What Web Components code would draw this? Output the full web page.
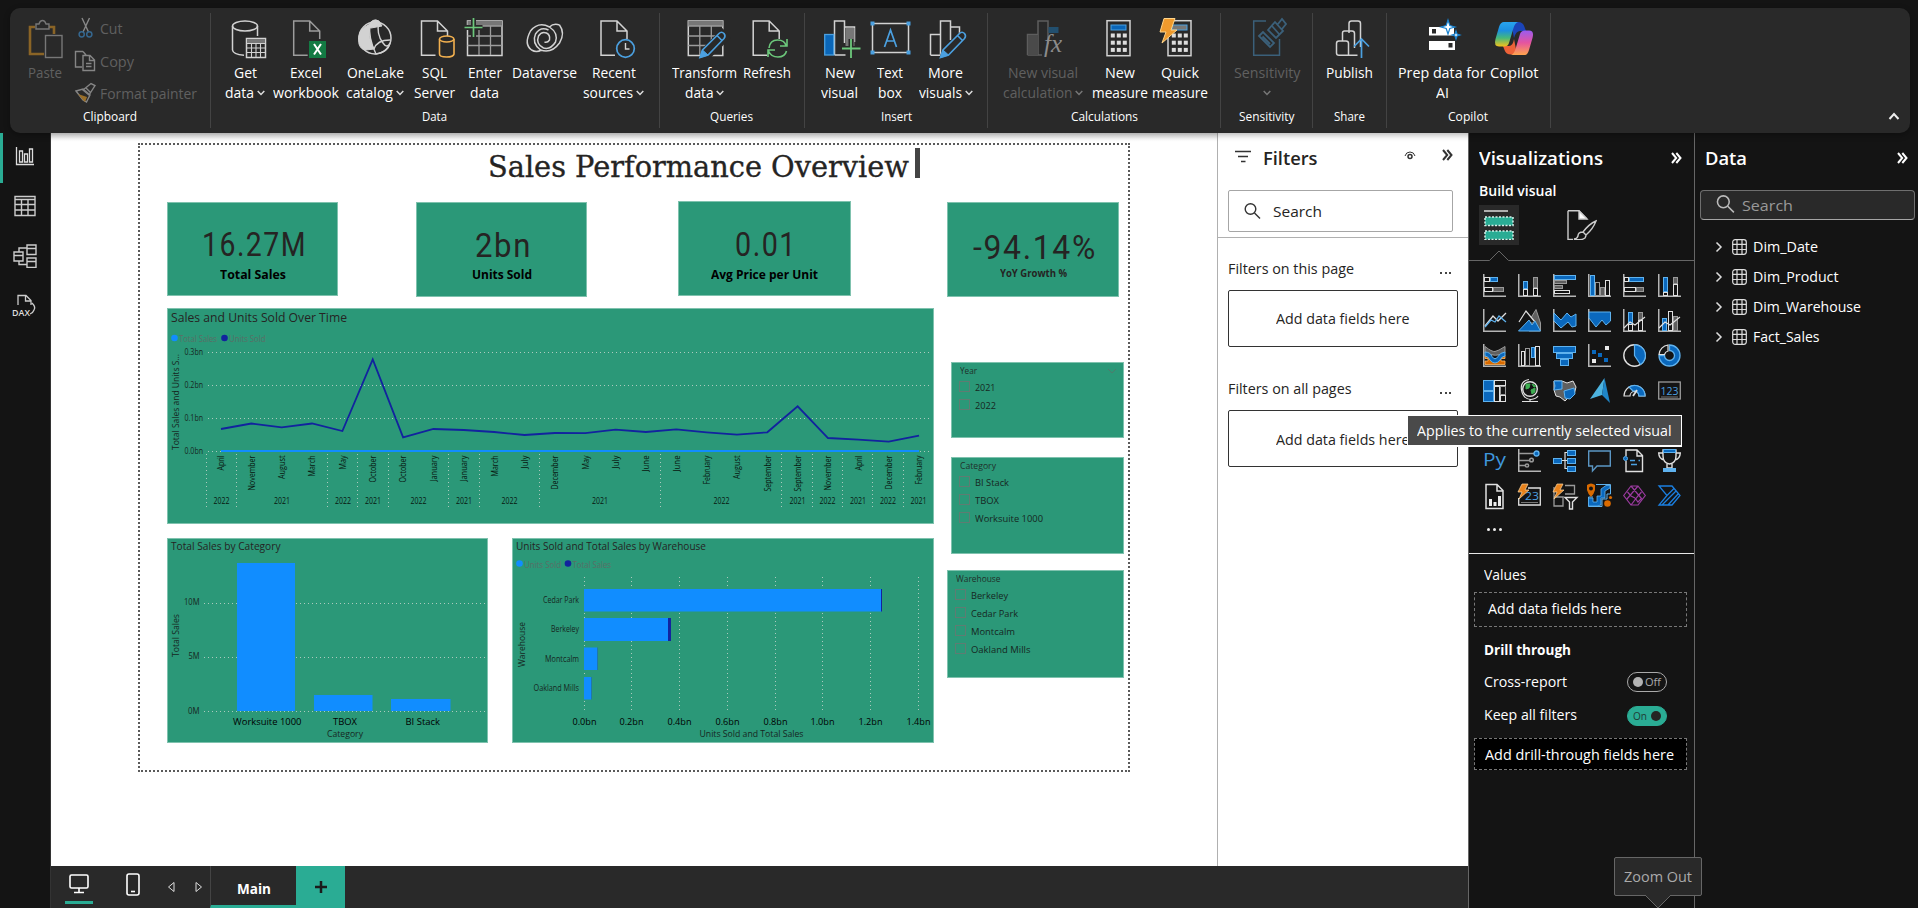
<!DOCTYPE html>
<html lang="en">
<head>
<meta charset="utf-8">
<title>Sales Performance Overview</title>
<style>
html,body{margin:0;height:100%}
body{background:#141414;font-family:"Open Sans","Noto Sans",sans-serif;overflow:hidden}
</style>
</head>
<body>
<report-app></report-app>
<script>
const define=(name,render)=>customElements.define(name,class extends HTMLElement{
  constructor(){super();this.attachShadow({mode:'open'})}
  connectedCallback(){this.shadowRoot.innerHTML=render(this)}
});

/* Text set to an exact advance width: <t-fit w="65">Dataverse</t-fit> */
customElements.define('t-fit',class extends HTMLElement{
  constructor(){super();this.attachShadow({mode:'open'}).innerHTML='<style>:host{display:inline-block;white-space:nowrap;text-align:left}span{display:inline-block;transform-origin:0 50%}</style><span><slot></slot></span>'}
  connectedCallback(){
    const w=+this.getAttribute('w'),s=this.shadowRoot.querySelector('span');
    this.style.width=w+'px';
    const n=s.offsetWidth;
    if(n)s.style.transform=`scaleX(${w/s.getBoundingClientRect().width})`;
  }
});
const F=(w,s,extra='')=>`<t-fit w="${w}" ${extra}>${s}</t-fit>`;

/* ---------- ribbon ---------- */
const L='#d2d2d2',G='#9c9c9c',B='#4ba0e0';
const P=(d,s=L,w=1.5,f='none',x='')=>`<path d="${d}" stroke="${s}" stroke-width="${w}" fill="${f}" ${x}/>`;
const R=(x,y,w,h,s=L,sw=1.5,f='none',r=0)=>`<rect x="${x}" y="${y}" width="${w}" height="${h}" stroke="${s}" stroke-width="${sw}" fill="${f}" rx="${r}"/>`;
const C=(x,y,r,s=L,w=1.5,f='none')=>`<circle cx="${x}" cy="${y}" r="${r}" stroke="${s}" stroke-width="${w}" fill="${f}"/>`;
const doc=(x,c=L)=>P(`M${x} 21H${x+16}L${x+26} 31V39M${x+16} 21V31H${x+26}M${x} 20.3V55.3H${x+14}`,c);
const bars=(x,c=L)=>P(`M${x} 55V34.5H${x+10}V21H${x+20}V27H${x+29}V34M${x+10} 34V55M${x+20} 26V40M${x} 55.2H${x+16}`,c);
const pencil=x=>P(`M${x} 57.5L${x+2.5} 50L${x+19} 33.500Q${x+21.5} 31 ${x+24} 33.500Q${x+26} 36 ${x+24} 38.500L${x+8} 55ZM${x+17} 35.500L${x+22} 40.500`,B,1.6,'#292929')+P(`M${x} 57.500L${x+2.5} 50L${x+8} 55Z`,B,1,B);
const grid=(x,w)=>R(x,21,w,34.5,L,1.5)+`<rect x="${x}" y="21" width="${w}" height="5" fill="#777"/>`+P(`M${x} 26H${x+w}M${x} 36H${x+w}M${x} 45.5H${x+w}M${x+w/3} 26V55M${x+w*2/3} 26V55`,G,1.3);
const calc=(x,c='#0a66b8')=>R(x,20.7,23,35)+R(x+4,25,15,5,B,1,c)+[0,1,2].map(r=>[0,1,2].map(k=>`<rect x="${x+3.8+k*6}" y="${33.5+r*7.2}" width="4" height="4" fill="#ddd"/>`).join('')).join('');
const icons={
 paste:P('M37 27H32V54H46M51 27H56V34','#8a6426',2.6)+P('M38 29V24H41Q42 20.5 44.5 20.5T48 24H51V29Z','#777',1.4)+R(47.5,35.5,16.5,22,'#777',1.4),
 get:`<ellipse cx="245" cy="26" rx="12.5" ry="5" stroke="${L}" stroke-width="1.5" fill="none"/>`+P('M232.5 26V50Q233 54.5 244 55.3M257.5 26V36')+R(246.5,38.5,19,19)+`<rect x="247" y="39" width="18" height="4" fill="#777"/>`+P('M247 43.5H265M247 48H265M247 52.5H265M251.5 43V57M256 43V57M260.5 43V57',L,1.1),
 excel:doc(293.7,G)+`<rect x="309" y="41" width="17" height="17" fill="#137a43"/><path d="M314 44L321 54.500M321 44L314 54.500" stroke="#fff" stroke-width="2"/>`,
 lake:C(375,38,16)+P('M379 22Q376 34 383 43Q387 49 390 43Q388 52 376 54Q368 38 370 24',L,1.4)+P('M370 24Q356 30 359 44Q361 50 366 50L374 49Q367 37 370 24Z',L,1,L)+P('M368 27Q372 17 379 21L382 26L371 28Z',L,1,L)+P('M374 49Q377 40 390 40',L,1.4),
 sql:doc(421)+`<g stroke="#f2b04f" stroke-width="1.6" fill="#292929"><path d="M439 39V54Q439 57 446 57T453.500 54V39"/><ellipse cx="446.200" cy="39" rx="7.200" ry="3"/></g>`,
 enter:grid(467,34.5)+`<path d="M464 27.500H482M473 18V37" stroke="#292929" stroke-width="5"/><path d="M464 27.500H482M473 18V37" stroke="#6cc77b" stroke-width="1.700"/>`,
 verse:P('M531 50Q523 44 530 31Q538 21 549 27Q558 33 555 42Q550 50 543 48Q535 44 538 36Q541 31 546 33Q550 35 549 40Q547 43 544 42M559 25Q565 33 559 43Q551 54 540 50Q531 43 535 34Q540 26 548 30M531 50Q536 53 541 50M559 25Q553 23 549 27',L,1.5),
 recent:doc(600.5)+C(625,48.5,8.8,'#4ba0e0',1.7,'#292929')+P('M625 43V49H629',L,1.4),
 transform:grid(687.8,34.5)+`<path d="M699 58L702 48L722 28L730 38L710 58Z" fill="#292929"/>`+pencil(699.5),
 refresh:doc(753.2)+P('M769 48Q770 40 777.500 40T786 46M787 39V46H780M786.500 51Q785 57 778 57T768.500 51M768 57V50H775','#6cc77b',1.6),
 nvis:P('M834 55V21H844V43M844 27H854V42M834 55H845')+`<rect x="845" y="28" width="9" height="21" fill="#777"/>`+R(824.2,34.5,9,20.5,B,1.3,'#0a66b8')+`<path d="M841 48.500H860M850.500 39V58" stroke="#292929" stroke-width="5"/><path d="M841.500 48.500H860M850.500 39V58" stroke="#6cc77b" stroke-width="1.800"/>`,
 tbox:R(872,23.5,36,29,L,1.5)+[[870,21.5],[906,21.5],[870,50.500],[906,50.500]].map(p=>`<rect x="${p[0]}" y="${p[1]}" width="4" height="4" fill="${B}"/>`).join('')+P('M884 47L890 30L896 47M886.500 41H893.500',B,1.7),
 mvis:bars(930)+`<path d="M939 58L942 48L962 30L969 38L949 58Z" fill="#292929"/>`+pencil(940),
 ncalc:`<g opacity=".55">`+P('M1027.500 55V34.500H1038V21H1048V44M1038 34V55M1027.500 55H1042','#888')+`<rect x="1028" y="35" width="10" height="20" fill="#666"/><rect x="1048.500" y="27" width="10" height="6" fill="#1e6ea8"/></g><text x="1044" y="52" font-family="Liberation Serif" font-style="italic" font-size="25" fill="#8c8c8c">fx</text>`,
 nmeas:calc(1106.5),
 quick:calc(1168,'#777')+`<path d="M1164 18.500H1175L1171 30H1177L1162 43L1166 32H1160Z" fill="#ef9a2d" stroke="#ffd58a" stroke-width="1"/>`,
 sens:P('M1266 21H1253.700V55.300H1279.500V39','#3b607a')+P('M1259 36L1263 32L1274 43L1270 47ZM1262.500 36.500L1270 44M1268 30L1275 22L1283 31L1276 38ZM1278 24L1282 19L1286 24L1282 29M1272 26L1279 34','#3b607a',1.8),
 publish:P('M1360 47V23.500Q1360 21 1357.500 21H1351Q1348.500 21 1348.500 23.500V33M1354 48V33.500Q1354 31 1351.500 31H1344Q1342 31 1342 33V41M1348 55V43.500Q1348 41 1345.500 41H1338.500Q1336 41 1336 43.500V53Q1336 55.300 1338.500 55.300H1357')+P('M1361 58V39M1353.500 46.500L1361 39L1368.500 46.500',B,1.7),
 prep:`<path d="M1429 27H1454V35.500H1429ZM1429 41H1455V50H1429Z" fill="#fff"/><rect x="1432" y="29" width="4" height="4.500" fill="#292929"/><rect x="1448.500" y="43" width="4" height="4.500" fill="#292929"/><path d="M1448 20L1449.800 25.500L1455 27L1449.800 28.500L1448 34L1446.200 28.500L1441 27L1446.200 25.500ZM1456 31L1457 34L1460 35L1457 36L1456 39L1455 36L1452 35L1455 34Z" fill="#fff" stroke="#1681cf" stroke-width="1.200"/>`,
 copilot:`<defs><linearGradient id="ca" x1="0" y1="0" x2="0" y2="1"><stop offset="0" stop-color="#28a4ee"/><stop offset=".35" stop-color="#1c8fe0"/><stop offset=".65" stop-color="#45b87b"/><stop offset="1" stop-color="#f4c21b"/></linearGradient><linearGradient id="cb" x1="0" y1="0" x2="0" y2="1"><stop offset="0" stop-color="#9a5cf0"/><stop offset=".5" stop-color="#e5549f"/><stop offset="1" stop-color="#ffa54d"/></linearGradient></defs>
 <path d="M1511 22H1518Q1523 22 1524.500 27L1526 31H1520Q1516 31 1514 38Z" fill="#1b44b8"/><path d="M1517 54.500H1511Q1506 54.500 1504.500 50L1503 46H1509Q1513 46 1514 39Z" fill="#ee6238"/>
 <path d="M1504 22H1518Q1515 23 1513.500 28L1509 43Q1508 46.500 1504 46.500H1499Q1493.500 46.500 1495.500 39L1499 27Q1500.500 22 1504 22Z" fill="url(#ca)"/><path d="M1525 55H1511Q1514 54 1515.500 49L1520 34Q1521 30.500 1525 30.500H1529Q1534.500 30.500 1532.500 38L1529 50Q1527.500 55 1525 55Z" fill="url(#cb)"/>`
};
const chev=(c='#ddd')=>`<svg width="8" height="6" viewBox="0 0 8 6" style="margin-left:3px;margin-bottom:-1px"><path d="M.7 1L4 4.500L7.300 1" fill="none" stroke="${c}" stroke-width="1.500"/></svg>`;
/* item: centre, width, icon, [word,width], [word,width], chevron, disabled */
const groups=[
 [210,659,434.5,'Data',25,[[245,50,'get',['Get',23],['data',29],1],[306,67,'excel',['Excel',32],['workbook',66]],[375,67,'lake',['OneLake',57],['catalog',47],1],[434.5,44,'sql',['SQL',25],['Server',41]],[484.5,40,'enter',['Enter',34],['data',29]],[544.5,68,'verse',['Dataverse',65]],[613.5,66,'recent',['Recent',44],['sources',50],1]]],
 [659,804,731.5,'Queries',43,[[704.5,68,'transform',['Transform',65],['data',28.5],1],[767,50,'refresh',['Refresh',48]]]],
 [804,987,896.5,'Insert',31,[[839.5,40,'nvis',['New',30],['visual',37]],[889.5,40,'tbox',['Text',26],['box',24]],[945.5,60,'mvis',['More',35],['visuals',43],1]]],
 [987,1220,1104.5,'Calculations',67,[[1043,86,'ncalc',['New visual',70],['calculation',69.5],1,1],[1119.5,60,'nmeas',['New',30],['measure',56]],[1180,60,'quick',['Quick',38],['measure',56]]]],
 [1220,1312,1266.5,'Sensitivity',55.5,[[1267,74,'sens',['Sensitivity',66.5],['',0],1,1]]],
 [1312,1386,1349.5,'Share',31,[[1349.5,60,'publish',['Publish',47]]]],
 [1386,1550,1468,'Copilot',40,[[1442,90,'prep',['Prep data for',87.5],['AI',13]],[1514,50,'copilot',['Copilot',48.5]]]]
];
define('ribbon-button',el=>{
  const d=el.data,[c,w,ic,a,b,ch,dis]=d;
  return `<style>:host{display:flex;flex-direction:column;align-items:center;width:${w}px;flex:none;font-size:15px;color:${dis?'#606060':'#fff'}}
  svg.i{overflow:visible;display:block}.l{height:20px;line-height:20px;display:flex;align-items:center;justify-content:center}</style>
  <svg class="i" width="40" height="40" viewBox="${c-20} 18 40 40">${icons[ic]}</svg><div style="height:4px"></div>
  <div class="l">${F(a[1],a[0])}</div>${b?`<div class="l">${b[1]?F(b[1],b[0]):''}${ch?(b[1]?chev(dis?'#777':'#ddd'):chev('#777').replace('margin-left:3px','')):''}</div>`:''}`;
});
define('ribbon-group',el=>{
  const [x0,x1,lc,lab,lw]=el.data;
  return `<style>:host{display:flex;flex-direction:column;box-sizing:border-box;width:${x1-x0}px;height:115px;flex:none;box-shadow:1px 0 #434343;padding-top:5px}
  .row{display:flex;height:88px}.g{height:20px;line-height:20px;margin-top:1px;font-size:12.500px;color:#fff;padding-left:${lc-lw/2-x0}px}</style>
  <div class="row"><slot></slot></div><div class="g">${F(lw,lab)}</div>`;
});
customElements.define('app-ribbon',class extends HTMLElement{
  constructor(){super();this.attachShadow({mode:'open'})}
  connectedCallback(){
    this.shadowRoot.innerHTML=`<style>:host{display:flex;box-sizing:border-box;height:125px;margin:8px 8px 0 10px;border-radius:10px;background:#292929;padding-top:5px;position:relative;z-index:3;box-shadow:0 2px 6px rgba(0,0,0,.3)}
    .clip{width:200px;height:115px;box-sizing:border-box;box-shadow:1px 0 #434343;display:grid;grid-template-columns:64px 1fr;grid-template-rows:93px 22px;color:#606060;font-size:15px}
    .paste{display:flex;flex-direction:column;align-items:center;padding-left:6px;padding-top:5px}.paste svg{overflow:visible}.paste div{margin-top:4px;line-height:20px}
    .ops{display:grid;grid-template-rows:30px 35px 30px;line-height:20px}.ops div{display:flex;align-items:center;gap:4px}
    .g{grid-column:1/3;text-align:center;font-size:12.500px;color:#fff;line-height:20px;margin-top:1px}
    .end{margin-left:auto;align-self:flex-end;margin-right:9px;margin-bottom:10px}</style>
    <div class="clip"><div class="paste"><svg width="40" height="40" viewBox="27 18 40 40">${icons.paste}</svg><div>${F(34,'Paste')}</div></div>
     <div class="ops">
      <div><svg width="22" height="22" viewBox="0 0 22 22"><path d="M8 1L14.500 15M15.500 1L9 15" stroke="#888" stroke-width="1.400"/><circle cx="7.700" cy="17.300" r="2.600" fill="none" stroke="#35678f" stroke-width="1.500"/><circle cx="15.300" cy="17.300" r="2.600" fill="none" stroke="#35678f" stroke-width="1.500"/></svg>${F(22.5,'Cut')}</div>
      <div><svg width="22" height="22" viewBox="0 0 22 22"><path d="M8 17H1.500V1.500H9M9 1.500L12 5M9 5.500H16L20.500 10V20.500H9ZM15.500 6V10.500H20M12 13.500H17.500M12 16.500H17.500" fill="none" stroke="#858585" stroke-width="1.400"/></svg>${F(34,'Copy')}</div>
      <div><svg width="22" height="22" viewBox="0 0 22 22"><path d="M2 9L9 18L12.500 20L16 13L9 7Z" fill="#292929" stroke="#858585" stroke-width="1.400"/><path d="M4 12L13 15L11 20L9 18Z" fill="#9a6f28"/><path d="M9 8L17 1.500L21 3.500L15 13ZM12 6L17 11" fill="none" stroke="#858585" stroke-width="1.400"/></svg>${F(97,'Format painter')}</div>
     </div><div class="g">${F(54,'Clipboard')}</div></div><slot></slot>
    <svg class="end" width="14" height="14" viewBox="0 0 14 14"><path d="M2.500 10L7 5L11.500 10" fill="none" stroke="#eee" stroke-width="2"/></svg>`;
    groups.forEach(g=>{
      const e=document.createElement('ribbon-group');e.data=g;let x=g[0];
      g[5].forEach(it=>{const b=document.createElement('ribbon-button');b.data=it;const s=it[0]-it[1]/2;b.style.marginLeft=(s-x)+'px';x=s+it[1];e.appendChild(b)});
      this.appendChild(e);
    });
  }
});

/* ---------- view rail ---------- */
define('view-rail',()=>`<style>:host{display:flex;flex-direction:column;width:50px;flex:none;background:#141414;border-right:1px solid #333}
 div{height:50px;display:flex;align-items:center;justify-content:center;box-sizing:border-box;padding-bottom:4px}.on{border-left:3px solid #2aac94;padding-right:3px}svg{display:block}</style>
 <div class="on"><svg width="20" height="20" viewBox="0 0 20 20" fill="none" stroke="#ddd" stroke-width="1.300"><path d="M1.500 1V18.500H19"/><path d="M4.500 5H7.500V16H4.500ZM9.500 8H12.500V16H9.500ZM14.500 3H17.500V16H14.500Z"/></svg></div>
 <div><svg width="22" height="22" viewBox="0 0 22 22" fill="none" stroke="#ccc" stroke-width="1.400"><path d="M1 1.500H21V20.500H1ZM1 4.500H21M1 9.500H21M1 15H21M7.500 5V20.500M14 5V20.500"/></svg></div>
 <div><svg width="24" height="24" viewBox="0 0 24 24" fill="none" stroke="#ccc" stroke-width="1.400"><path d="M1 8H10V17H1ZM1 11.500H10M14 1H23V10.500H14ZM14 4.500H23M14 14H23V23.500H14ZM14 17.500H23M6 8V4H14M6 17V20.500H14"/></svg></div>
 <div><svg width="26" height="24" viewBox="0 0 26 24" fill="none" stroke="#ccc" stroke-width="1.300" style="overflow:visible"><path d="M6 11V1.500H14L19 6.500V11M13.500 2V7H19M20 9Q24 13 22 16Q21 19 18 20"/><text x="0" y="22" font-family="Open Sans" font-weight="600" font-size="9.500" textLength="18" lengthAdjust="spacingAndGlyphs" fill="#ddd" stroke="none">DAX</text></svg></div>`);

/* ---------- report visuals ---------- */
const INK='#16271f';
const T=(x1,x2,y,s,fs,fill=INK,w=400,ff='Open Sans')=>`<text x="${x1}" y="${y+fs*.36}" textLength="${x2-x1}" lengthAdjust="spacingAndGlyphs" font-size="${fs}" font-weight="${w}" fill="${fill}" font-family="${ff}, sans-serif">${s}</text>`;
const V=(x,yTop,yBot,s,fs,fill=INK)=>`<text transform="translate(${x+fs*.36} ${yBot}) rotate(-90)" textLength="${yBot-yTop}" lengthAdjust="spacingAndGlyphs" font-size="${fs}" fill="${fill}" font-family="Open Sans, sans-serif">${s}</text>`;
const dot=(x,y,c)=>`<circle cx="${x}" cy="${y}" r="3.300" fill="${c}"/>`;
const dash=(d)=>`<path d="${d}" stroke="#b9cfc5" stroke-width="1" stroke-dasharray="1 3" fill="none" opacity=".9"/>`;
const panel=(x,y,w,h,body)=>`<style>:host{display:block;flex:none;box-sizing:border-box;width:${w}px;height:${h}px;background:#2b9878;box-shadow:inset 0 0 0 1px #7fc2ae}svg{display:block}</style><svg width="${w}" height="${h}" viewBox="${x} ${y} ${w} ${h}">${body}</svg>`;
define('line-visual',()=>{
  const ys=[429,423.5,427.3,423.5,431,359.5,437.3,429,430,432,435,433,433.2,429.7,432,429.3,432.3,434.7,432.3,406.3,438,439.7,441.7,435.7];
  const px=i=>221+i*30.35;
  const ms='April November August March May October October January January March July December May July June June February August September September November April December February'.split(' ');
  const len={April:15,November:35,August:23.5,March:21,May:14,October:27,January:26,July:13,December:34,June:16,February:29,September:36};
  let b=T(171,347,317.5,'Sales and Units Sold Over Time',13,'#252423')+dot(174.5,338,'#118DFF')+T(179,217,338.5,'Total Sales',8.7,'#5a6e66')+dot(224.5,338,'#12239E')+T(229,265.5,338.5,'Units Sold',8.7,'#5a6e66');
  ['0.3bn','0.2bn','0.1bn','0.0bn'].forEach((s,i)=>b+=T(184.5,203,352.2+i*33,s,8.7)+dash(`M208 ${352.5+i*33}H929`));
  b+=V(176,354,450,'Total Sales and Units S...',9.3);
  [206.5,236.5,327.5,357.5,388.5,448.5,479.5,539.5,660.5,781.5,812.5,842.5,872.5,903.5].forEach(x=>b+=dash(`M${x} 454V509`));
  ms.forEach((m,i)=>b+=V(px(i)+.2,455.5,455.5+len[m],m,8.8,'#08160f'));
  [[221.5,2022],[282,2021],[343,2022],[373,2021],[418.5,2022],[464,2021],[509.5,2022],[600,2021],[721.5,2022],[797.5,2021],[827.5,2022],[858,2021],[888,2022],[918.5,2021]].forEach(a=>b+=T(a[0]-8,a[0]+8,501,a[1],8.7,'#08160f'));
  b+=`<path d="M221 451H919" stroke="#118DFF" stroke-width="2"/><path d="M${ys.map((y,i)=>px(i)+' '+y).join('L')}" fill="none" stroke="#12239E" stroke-width="1.800"/>`;
  return panel(167,308,767,216,b);
});
define('column-visual',()=>{
  let b=T(171,280.5,545.8,'Total Sales by Category',11.3,'#252423');
  [['10M',184,603],['5M',188.5,657],['0M',188,711.5]].forEach(a=>b+=T(a[1],199.5,a[2]-.8,a[0],8.7)+dash(`M204 ${Math.floor(a[2])+.5}H485`));
  b+=`<path d="M237 563H295V711H237ZM314 695H372.500V711H314ZM391 699H450.500V711H391Z" fill="#118DFF"/>`;
  b+=T(233,301.5,721,'Worksuite 1000',9.8,'#000')+T(333,357,721,'TBOX',9.8,'#000')+T(405.5,440,721,'BI Stack',9.8,'#000')+T(327,363,734,'Category',9.3)+V(176,614,657,'Total Sales',9);
  return panel(167,538,321,205,b);
});
define('bar-visual',()=>{
  let b=T(516,706,545.8,'Units Sold and Total Sales by Warehouse',11.3,'#252423')+dot(519.5,563.5,'#118DFF')+T(524,561,564.5,'Units Sold',8.5,'#5a6e66')+dot(568,563.5,'#12239E')+T(572.5,611,564.5,'Total Sales',8.5,'#5a6e66');
  for(let i=0;i<8;i++){const x=Math.floor(584+i*47.75)+.5;b+=dash(`M${x} 577V713`)+T(x-12,x+12,721,(i*.2).toFixed(1)+'bn',9.8,'#000')}
  b+=`<path d="M584 589H881.500V611.500H584ZM584 618H668V641H584ZM584 647.500H597V670H584ZM584 677H591.300V699.500H584Z" fill="#118DFF"/><path d="M881 589H882V611.500H881ZM668 618H671V641H668Z" fill="#12239E"/><path d="M597 647.500H598V670H597ZM591 677H592V699.500H591Z" fill="#1f78a8"/>`;
  b+=T(543,579,600,'Cedar Park',8.7)+T(551,579,629,'Berkeley',8.7)+T(545,579,658.8,'Montcalm',8.7)+T(533.5,579,687.8,'Oakland Mills',8.7)+T(699.5,803.5,734,'Units Sold and Total Sales',9.3)+V(522,622,667,'Warehouse',9);
  return panel(512,538,422,205,b);
});
define('kpi-card',el=>{
  const g=k=>el.getAttribute(k);
  return `<style>:host{display:flex;flex-direction:column;align-items:center;flex:none;box-sizing:border-box;background:#2b9878;box-shadow:inset 0 0 0 1px #7fc2ae}
  .v{font:400 34px/40px Roboto,sans-serif;letter-spacing:1.800px;color:#252423;margin-top:${g('top')||22}px;padding-left:3px}.c{font-weight:700;font-size:${g('fs')||13}px;line-height:20px;color:${g('ink')||'#000'};margin-top:${g('gap')||'0'}px}</style>
  <div class="v">${F(g('vw'),g('value'))}</div><div class="c">${F(g('cw'),g('label'))}</div>`;
});
define('list-slicer',el=>{
  const items=el.getAttribute('items').split(',').map(s=>s.split(':'));
  const [n,w]=el.getAttribute('head').split(':');
  return `<style>:host{display:block;flex:none;box-sizing:border-box;background:#2b9878;box-shadow:inset 0 0 0 1px #7fc2ae;padding:2px 7px 0 8px;color:${INK}}
  .h{display:flex;justify-content:space-between;align-items:center;font-size:9.300px;line-height:14px;height:14px;font-weight:500;color:#1f302a;padding-left:.500px}.r{display:flex;align-items:center;height:18px;line-height:18px;font-size:9.800px;gap:4.500px}
  i{width:9px;height:9px;border:1px solid #5e7c72;margin-top:-2px}</style>
  <div class="h">${F(w,n)}${el.hasAttribute('menu')?'<svg width="10" height="6"><path d="M1 1L5 5L9 1" fill="none" stroke="#4f7a6b"/></svg>':''}</div><div style="height:.500px"></div>`+items.map(a=>`<div class="r"><i></i>${F(a[1],a[0])}</div>`).join('');
});
define('report-page',()=>`<style>:host{display:block;box-sizing:border-box;width:992px;height:629px;margin:10px 0 0 87px;border:2px dotted #5a5a5a;padding-left:27px}
 .t{height:57px;padding-left:321px;display:flex;align-items:flex-start;font:29px/40px "DejaVu Serif","Liberation Serif",serif;color:#252423}
 .t t-fit{margin-top:1.500px;-webkit-text-stroke:.350px #252423}
 .caret{width:5px;height:30px;background:#444;margin:3px 0 0 6px}.b{display:flex;gap:13px}.l{width:767px;flex:none}.k{display:flex;height:94px}.two{display:flex;gap:24px;margin-top:14px}.r{display:flex;flex-direction:column}
 line-visual{margin-top:12px}</style>
 <div class="t">${F(421,'Sales Performance Overview')}<span class="caret"></span></div>
 <div class="b"><div class="l"><div class="k">
  <kpi-card style="width:171px;height:94px" value="16.27M" vw="105" label="Total Sales" cw="66"></kpi-card>
  <kpi-card style="width:171px;height:95px;margin-left:78px" value="2bn" vw="57" label="Units Sold" cw="60" top="23" gap="-1"></kpi-card>
  <kpi-card style="width:173px;height:95px;margin:-1px 0 0 91px" value="0.01" vw="62" label="Avg Price per Unit" cw="107" top="23"></kpi-card></div>
  <line-visual></line-visual><div class="two"><column-visual></column-visual><bar-visual></bar-visual></div></div>
 <div class="r"><kpi-card style="width:172px;height:95px" value="-94.14%" vw="124" label="YoY Growth %" cw="67" top="25" gap="-3" fs="9.800" ink="#252423"></kpi-card>
  <list-slicer style="width:173px;height:76px;margin:65px 0 0 4px" head="Year:17" menu items="2021:20.500,2022:21"></list-slicer>
  <list-slicer style="width:173px;height:97px;margin:19px 0 0 4px" head="Category:36" items="BI Stack:34,TBOX:24,Worksuite 1000:68"></list-slicer>
  <list-slicer style="width:177px;height:108px;margin-top:16px" head="Warehouse:44.500" items="Berkeley:37,Cedar Park:47,Montcalm:44,Oakland Mills:59.500"></list-slicer></div></div>`);

define('page-tabs',()=>`<style>:host{display:flex;height:42px;background:#292929;color:#fff;align-items:stretch}
 .i{display:flex;align-items:center;justify-content:center;box-sizing:border-box}.m{width:28px;margin-left:14px;border-bottom:3px solid #2aac94;margin-bottom:4px}.p{width:28px;margin-left:26px;padding-bottom:4px}
 .a{width:20px}.tab{width:86px;border-left:1px solid #444;border-bottom:3px solid #2aac94;font-weight:700;font-size:14px;padding-top:5px;margin-left:1px}.plus{width:49px;background:#2aac94}</style>
 <div class="i m"><svg width="22" height="22" viewBox="0 0 22 22" fill="none" stroke="#fff" stroke-width="1.600"><rect x="2" y="2" width="18" height="13" rx="1.500"/><path d="M11 15V19M6 19.500H16"/></svg></div>
 <div class="i p"><svg width="14" height="24" viewBox="0 0 14 24" fill="none" stroke="#fff" stroke-width="1.600"><rect x="1" y="1" width="12" height="21" rx="2"/><path d="M5 18.500H9"/></svg></div>
 <div class="i a" style="margin-left:14px"><svg width="8" height="12" viewBox="0 0 8 12"><path d="M7 1.500V10.500L1.500 6Z" fill="none" stroke="#ddd"/></svg></div><div class="i a" style="margin-left:8px"><svg width="8" height="12" viewBox="0 0 8 12"><path d="M1 1.500V10.500L6.500 6Z" fill="none" stroke="#ddd"/></svg></div>
 <div class="i tab">${F(34,'Main')}</div><div class="i plus"><svg width="14" height="14"><path d="M7 1V13M1 7H13" stroke="#1b1b1b" stroke-width="2.500"/></svg></div>`);

/* ---------- panes ---------- */
const mag=(c,s=18)=>`<svg width="${s}" height="${s}" viewBox="0 0 18 18" fill="none" stroke="${c}" stroke-width="1.400"><circle cx="7.500" cy="7" r="5.300"/><path d="M11.500 11L17 16.500"/></svg>`;
const dbl=(c)=>`<svg width="11" height="12" viewBox="0 0 11 12" fill="none" stroke="${c}" stroke-width="2"><path d="M1 1L5.200 6L1 11M5.300 1L9.500 6L5.300 11"/></svg>`;
define('filters-pane',()=>`<style>:host{display:block;box-sizing:border-box;width:251px;flex:none;background:#fff;border-left:1px solid #b0b0b0;color:#252423;font-size:14.500px;line-height:20px}
 .h{display:flex;align-items:center;height:50px;padding-left:17px;font-weight:600;font-size:18px}.s{display:flex;align-items:center;gap:12px;box-sizing:border-box;margin:7px 0 0 10px;width:225px;height:42px;border:1px solid #a6a6a6;border-radius:2px;padding-left:14px}
 .hr{height:1px;background:#b0b0b0;margin-top:5px}.r{display:flex;justify-content:space-between;padding:0 17px 0 10px;height:20px}.bx{box-sizing:border-box;width:230px;height:57px;margin:11px 0 1px 10px;border:1px solid #333;border-radius:2px;display:flex;align-items:center;justify-content:center}
 .d{display:flex;gap:2.500px;margin-top:13px}.d b{width:2px;height:2px;background:#444}.s t-fit{margin-top:2px}.s svg{margin-top:-1px}</style>
 <div class="h"><svg width="16" height="13" style="margin:0 12px 3px 0"><path d="M0 1.500H16M3 6.500H13M6 11.500H10.500" stroke="#333" stroke-width="1.700"/></svg>${F(54.5,'Filters')}
 <svg width="12" height="12" viewBox="0 0 12 12" style="margin:0 0 4px 86.500px" fill="none" stroke="#333"><path d="M1 6Q2 2 6 2T11 6"/><circle cx="6" cy="6.500" r="2" stroke-width="1.500"/></svg><span style="margin:0 0 6px 26px;line-height:0">${dbl('#333')}</span></div>
 <div class="s">${mag('#333')}${F(49,'Search')}</div><div class="hr"></div>
 <div class="r" style="margin-top:21px">${F(126,'Filters on this page')}<span class="d"><b></b><b></b><b></b></span></div><div class="bx">${F(133.5,'Add data fields here')}</div>
 <div class="r" style="margin-top:32px">${F(123.5,'Filters on all pages')}<span class="d"><b></b><b></b><b></b></span></div><div class="bx"><t-fit w="133.500" style="margin-top:2px">Add data fields here</t-fit></div>`);

const b1='#0a68bd',b2='#5fb2ee',g1='#5f5f5f',g2='#9a9a9a',w1='#e0e0e0';
const ax=`<path d="M.75 0V22.250H23" stroke="#b5b5b5" stroke-width="1.500" fill="none"/>`;
const q=(x,y,w,h,f,s)=>`<rect x="${x+.5}" y="${y+.5}" width="${w-1}" height="${h-1}" fill="${f}" stroke="${s}"/>`;
const N='#141414';
const viz=[
 ax+q(1,3,6,5,N,w1)+q(7,3,8,5,b1,b2)+q(1,13,9,5,N,w1)+q(10,13,11,5,g1,g2),
 ax+q(5,7,5,8,b1,b2)+q(5,15,5,7,N,w1)+q(15,3,5,11,g1,g2)+q(15,14,5,8,N,w1),
 ax+q(1,1,22,5,b1,b2)+q(1,6,13,4,g1,g2)+q(1,11,9,4,g1,g2)+q(1,16,16,4,N,w1),
 ax+q(2,1,5,21,b1,b2)+q(7,8,5,14,N,g2)+q(12,13,5,9,g1,g2)+q(17,6,5,16,N,w1),
 ax+q(1,3,5,5,N,w1)+q(6,3,15,5,b1,b2)+q(1,13,12,5,N,w1)+q(13,13,8,5,g1,g2),
 ax+q(5,3,5,15,b1,b2)+q(5,18,5,4,N,w1)+q(15,3,5,7,g1,g2)+q(15,10,5,12,N,w1),
 ax+P('M2 17L10 7L15 12L23 4',w1,1.3)+P('M2 18L8 11L12 13L16 7L23 13',b2,1.3),
 P('M11 12L18 .500L22.500 14V22H11Z',g2,1,g1)+P('M1 13L8 2L17 13',w1,1.2,N)+P('M.500 22L11 11L14 16L17 12L22.500 22Z',b2,1,b1),
 ax+P('M1 4L8 11L14 4L18 8L23 5V17L19 18L15 13L8 19L1 12Z',b2,1,b1),
 ax+P('M1 3H22.500V12L18 16L14 11L8 18L1 9Z',b2,1,b1),
 ax+q(5,3,5,13,b1,b2)+q(5,15,5,7,N,w1)+q(15,3,5,8,g1,g2)+q(15,11,5,11,N,w1)+P('M1 19L7 13L12 16L22 8',w1,1.2),
 ax+q(4,9,5,13,b1,b2)+q(10,2,5,20,N,w1)+q(15,7,5,15,g1,g2)+P('M1 19L7 13L12 16L22 8',w1,1.2),
 ax+P('M2 11.500H7L9 15H15L17 11.500H22V14.500H18V17H22V20.500H2V17H5V14.500H2Z','#ffb763',.8,'#d96a00')+P('M2 2.500Q9 8 12 7.500T22 2.500V8.500Q13 14 2 8.500Z',g2,1,g1)+P('M2 8Q7 8 9 12.500Q12 17 15 12.500Q17 8.500 22 8V12Q19 12 17 16Q12 22 7 16Q5 12 2 12Z',b2,1,b1),
 ax+q(3,7,4,15,N,w1)+q(7,4,5,18,N,g2)+q(13,3,4,11,b1,b2)+q(17,2,5,20,N,w1),
 q(0,2,23,7,b1,b2)+q(3,9,17,6,b1,b2)+q(7,15,9,7,b1,b2),
 ax+`<path d="M17 2h4v4h-4zM4 15h4v4h-4z" fill="#e8e8e8"/><path d="M4 6h4v4h-4zM10 9h4v4h-4zM16 14h4v4h-4z" fill="${b1}"/>`,
 C(11.5,11.5,10.7,w1,1.4)+P('M11.500 .800A10.700 10.700 0 0 1 17.500 20.500L11.500 11.500Z',b2,1.2,b1),
 P('M11.500 1A10.500 10.500 0 1 1 1 11.500H6.500A5 5 0 1 0 11.500 6.500Z',b2,1.3,b1)+P('M1 10.500A10.500 10.500 0 0 1 10 1V7A5 5 0 0 0 6.500 10.500Z',w1,1.2,N),
 q(0,1,11,11,b1,b2)+q(0,12,11,11,b1,b2)+q(11,1,12,6,N,w1)+q(11,7,6,16,N,w1)+q(17,7,6,9,N,g2)+q(17,16,6,7,N,w1),
 C(12,10,7.3,w1,1.4)+`<path d="M8 5L12 5L11 9L8 10ZM13 11L17 9V13L14 15ZM14 5L18 7L16 8Z" fill="#3fae52" stroke="#3fae52"/>`+P('M11 .500Q2 2 3.500 11T13 20.500Q18 20 20 17M12 20V22M4 22.500H20',w1,1.2),
 P('M1 2H9L14 4L20 2L23 8L21 16L15 19L12 22L7 18L3 17L1 11Z',w1,1,g1)+P('M1 2H9L9 10L1 11L2 7ZM11 12L21 9L22 15L17 20L12 19Z',b2,1,b1),
 `<path d="M16.500 -1L2 20L14 16Z" fill="#4db3df"/><path d="M16.500 -1L22 24L14 16Z" fill="#1f86c8"/>`,
 P('M1 17A10.500 10.500 0 0 1 22 17H16A4.500 4.500 0 0 0 7 17Z',w1,1.2,N)+P('M6 8A10.500 10.500 0 0 1 22 17H16Q15 11 10 12Z',b2,1.2,b1)+P('M10 17L14 11',w1,1.8),
 R(.7,3,21.6,17,g2,1.3)+`<path d="M3 18H20" stroke="#777"/><text x="2.500" y="15.500" font-family="Open Sans" font-size="11.500" textLength="18" lengthAdjust="spacingAndGlyphs" fill="#4ba0e0">123</text>`,
 q(0,1,23,20,N,w1),'',q(0,1,23,20,N,w1),q(0,1,23,20,N,w1),q(0,1,23,20,N,w1),'',
 `<text x="0" y="16.500" font-family="Open Sans" font-size="18.500" textLength="23" lengthAdjust="spacingAndGlyphs" fill="#3f97dd">Py</text>`,
 ax+P('M1 4.500H16M1 11.500H12M1 16.500H8',g2,1.4)+C(18.500,4.500,2.500,b2,1.3,b1)+C(13.5,11,1.8,g2)+C(9,16.500,1.6,g2),
 P('M8 11.500H12V3.500H15M12 11.500H15M12 11.500V19.500H15',w1,1.2)+q(0,9,9,6,b1,b2)+q(14,1,9,6,b1,b2)+q(14,9,9,6,b1,b2)+q(14,17,9,6,b1,b2),
 P('M.700 2H22.300V17H9L4.500 22V17H.700Z','#5b96c4',1.4),
 P('M3 7V1H14L19.500 6.500V22.500H3V12M14 1V7H19',w1,1.4)+C(2.500,9.500,2,b2,1,b1)+P('M7 11.500H12M8 15.500H14M15.500 11.500H17',B,1.4),
 P('M5 1H18V7Q18 14 11.500 15Q5 14 5 7ZM5 4H.700Q1 10 6 11M18 4H22.300Q22 10 17 11M9 15V19H14V15',w1,1.4)+q(5,0,13,4,b1,b2)+q(5,19,13,4,b2,b2),
 P('M3 .500H14L20 6.500V24.500H3ZM14 .500V7H20',w1,1.5)+`<path d="M6 15h3v7h-3zM10.500 18h3v4h-3zM15 12h3v10h-3z" fill="#eee"/>`,
 P('M10 4H22.300V21H.700V14',w1,1.3)+`<path d="M3 18.500H20" stroke="#777"/><text x="7" y="16" font-family="Open Sans" font-size="11.500" textLength="14" lengthAdjust="spacingAndGlyphs" fill="#4ba0e0">23</text><path d="M4 0H10L7 6H11L1 15L4 8H0Z" fill="#e8821c" stroke="#ffd9a0" stroke-width=".700"/>`,
 P('M12 1.500H21.500V10H12M1 13H10V22H1ZM1 13V3',g2,1.3)+P('M12 13.500H24L19.500 18V25H16.500V18Z',w1,1.4)+`<path d="M4 0H10L7 6H11L1 15L4 8H0Z" fill="#e8821c" stroke="#ffd9a0" stroke-width=".700"/>`,
 `<path d="M8 .500H22.500V10H19V15H14V22.500H.500V13H5" fill="none" stroke="${b2}"/><path d="M.500 14H5V18L9 18V12H13V5L18 1.500H22V4L17 7V14H13V21L9 22H.500Z" fill="${b1}" stroke="${b2}" stroke-width=".800"/><path d="M-1 1Q3 -2 7 1V6Q6 10 3 13Q0 10 -1 6Z" fill="#d96a00"/><circle cx="3" cy="4.500" r="2" fill="${N}"/><circle cx="19.500" cy="19.500" r="3.300" fill="#d96a00"/><circle cx="22.500" cy="13.500" r="1.600" fill="#d96a00"/>`,
 P('M.700 11.500L8 2H15L22.300 11.500L15 21H8ZM8 2L18.500 14.500L15 18L12 14M15 2L4 15M8 21L15 12L18.500 8M4.500 8L8 12L12 14','#9b3aa0',1.2),
 P('M1 2H14L22 11.500L14 21H1L9 11.500ZM9 11.500L16 4.500M4 21L18 7M10 21L20.500 9.500','#1b7fe0',1.3)
];
define('icon-gallery',()=>`<style>:host{display:grid;grid-template-columns:repeat(6,35px);grid-auto-rows:35px;padding:13px 0 0 14px}svg{overflow:visible;display:block}.m{display:flex;gap:3px;padding:8.500px 0 0 4px}.m i{width:3px;height:3px;border-radius:50%;background:#eee}</style>`+viz.map(s=>`<svg width="23" height="23" viewBox="0 0 23 23">${s}</svg>`).join('')+'<span class="m"><i></i><i></i><i></i></span>');
define('toggle-switch',el=>{const on=el.hasAttribute('on');return `<style>:host{display:flex;align-items:center;gap:2px;box-sizing:border-box;width:40px;height:20px;border-radius:10px;border:1px solid ${on?'#2aac94':'#aaa'};background:${on?'#2aac94':'transparent'};padding:0 5px;font-size:11px;line-height:18px;color:${on?'#1f3b35':'#aaa'};justify-content:space-between}i{width:10px;height:10px;border-radius:50%;background:${on?'#252423':'#b3b3b3'}}</style>${on?F(14,'On')+'<i></i>':'<i></i>'+F(16,'Off')}`});
define('viz-pane',()=>`<style>:host{display:block;box-sizing:border-box;width:226px;flex:none;background:#141414;border-left:1px solid #666;color:#fff;font-size:14.500px;line-height:20px}
 .h{display:flex;align-items:center;justify-content:space-between;height:50px;padding:0 12px 0 10px;font-weight:600;font-size:18px}.bv{padding-left:10px;font-weight:600;height:20px;margin-top:-2px;font-size:14px}
 .tb{display:flex;gap:43px;margin:4px 0 0 10px}.tb div{width:40px;height:40px;display:flex;align-items:center;justify-content:center}.tb .s{background:#292929}
 .car{display:block}.hr{height:1px;background:#e8e8e8}.x{padding-left:15px}.r{display:flex;justify-content:space-between;align-items:center;padding:0 27px 0 15px}
 .d{margin:7px 0 0 5px;width:213px;height:35px;box-sizing:border-box;border:1px dashed #777;padding-left:12.500px;line-height:32px}</style>
 <div class="h">${F(124,'Visualizations')}${dbl('#fff')}</div><div class="bv">${F(77.5,'Build visual')}</div>
 <div class="tb"><div class="s"><svg width="30" height="30" viewBox="0 0 30 30"><path d="M0 1H24" stroke="#ddd" stroke-width="1.500"/><path d="M1 7H29V15.500H1ZM1 21H29V29.500H1Z" fill="#2aac94" stroke="#d8efe9" stroke-width="1.500" stroke-dasharray="2 1.500"/></svg></div>
 <div><svg width="30" height="30" viewBox="0 0 30 30" fill="none" stroke="#ccc" stroke-width="1.400"><path d="M1 .700H12L20 9M1 .700V29.500H6"/><path d="M12 1L20 9H12Z" fill="#fff"/><path d="M29 11Q22 14 16 22L19 25Q26 19 29 11ZM16 22Q11 22 11 26Q10 29 7 29Q14 31 18 28Q19 26 19 25"/></svg></div></div>
 <svg class="car" width="225" height="16" viewBox="0 0 225 16"><path d="M0 15.500H20.500L30 6L39.500 15.500H225" fill="none" stroke="#666"/></svg>
 <div style="height:292px"><icon-gallery></icon-gallery></div><div class="hr"></div>
 <div class="x" style="margin-top:11px">${F(42.5,'Values')}</div><div class="d">${F(133.5,'Add data fields here')}</div>
 <div class="x" style="margin-top:13px;font-weight:700;font-size:14px">${F(87,'Drill through')}</div>
 <div class="r" style="margin-top:12px">${F(83,'Cross-report')}<toggle-switch></toggle-switch></div><div class="r" style="margin-top:13px">${F(93,'Keep all filters')}<toggle-switch on style="position:relative;top:1px"></toggle-switch></div>
 <div class="d" style="background:#000;height:32px;line-height:31px;margin-top:13px;padding-left:10px">${F(189,'Add drill-through fields here')}</div>`);
define('data-pane',()=>{
 const row=(n,w)=>`<div class="r"><svg width="8" height="12" viewBox="0 0 8 12"><path d="M1.500 1.500L6 6L1.500 10.500" fill="none" stroke="#ddd" stroke-width="1.500"/></svg><svg width="15" height="16" viewBox="0 0 15 16" fill="none" stroke="#ddd" stroke-width="1.200"><rect x=".700" y=".700" width="13.600" height="14.600" rx="2.500"/><path d="M.700 5.300H14.300M.700 10.500H14.300M5 .700V15.300M10 .700V15.300"/></svg>${F(w,n)}</div>`;
 return `<style>:host{display:block;box-sizing:border-box;flex:1;min-width:0;background:#141414;border-left:1px solid #666;color:#fff;font-size:14.500px;line-height:20px}
 .h{display:flex;align-items:center;justify-content:space-between;height:50px;padding:0 10px 0 10px;font-weight:600;font-size:18px}
 .s{display:flex;align-items:center;gap:7px;box-sizing:border-box;margin:7px 3px 11.500px 5px;height:30px;border:1px solid #6f6f6f;border-bottom-color:#a5a5a5;border-radius:4px;background:#292929;color:#999;padding-left:14px;font-size:15px}
 .s svg{margin-top:-2px}.r{display:flex;align-items:center;height:30px;padding-left:20px}.r svg+svg{margin:0 6.500px 0 8.500px}</style>
 <div class="h">${F(42,'Data')}${dbl('#fff')}</div><div class="s">${mag('#bbb',20)}${F(51,'Search')}</div>`+row('Dim_Date',65)+row('Dim_Product',85.5)+row('Dim_Warehouse',108)+row('Fact_Sales',66.5)});

define('report-app',()=>`<style>:host{display:flex;flex-direction:column;width:1918px;height:908px;overflow:hidden;position:relative}
 .main{display:flex;flex:1;min-height:0}.mid{display:flex;flex-direction:column;width:1417px;flex:none}.top{display:flex;height:733px;flex:none}.cv{flex:1;background:linear-gradient(#e4e4e4,#fff 8px)}
 .tip{position:absolute;box-sizing:border-box;left:1407px;top:415px;width:275px;height:32px;border:1px solid #fff;border-bottom-width:2px;background:#4a4a4a;color:#fff;font-size:14.500px;line-height:29px;padding-left:9px}
 .zo{position:absolute;box-sizing:border-box;left:1614px;top:857px;width:88px;height:39px;border:1px solid #666;border-radius:2px;background:#292929;color:#aaa;font-size:15px;line-height:37px;padding-left:9px}
 .zo svg{position:absolute;left:30px;top:37px}.cv{display:flow-root}</style>
 <app-ribbon></app-ribbon>
 <div class="main"><view-rail></view-rail><div class="mid"><div class="top"><div class="cv"><report-page></report-page></div><filters-pane></filters-pane></div><page-tabs></page-tabs></div><viz-pane></viz-pane><data-pane></data-pane></div>
 <div class="tip">${F(254.5,'Applies to the currently selected visual')}</div>
 <div class="zo">${F(68,'Zoom Out')}<svg width="26" height="14"><path d="M0 0L13 13L26 0" fill="#292929" stroke="#666"/></svg></div>`);
</script>
</body>
</html>
